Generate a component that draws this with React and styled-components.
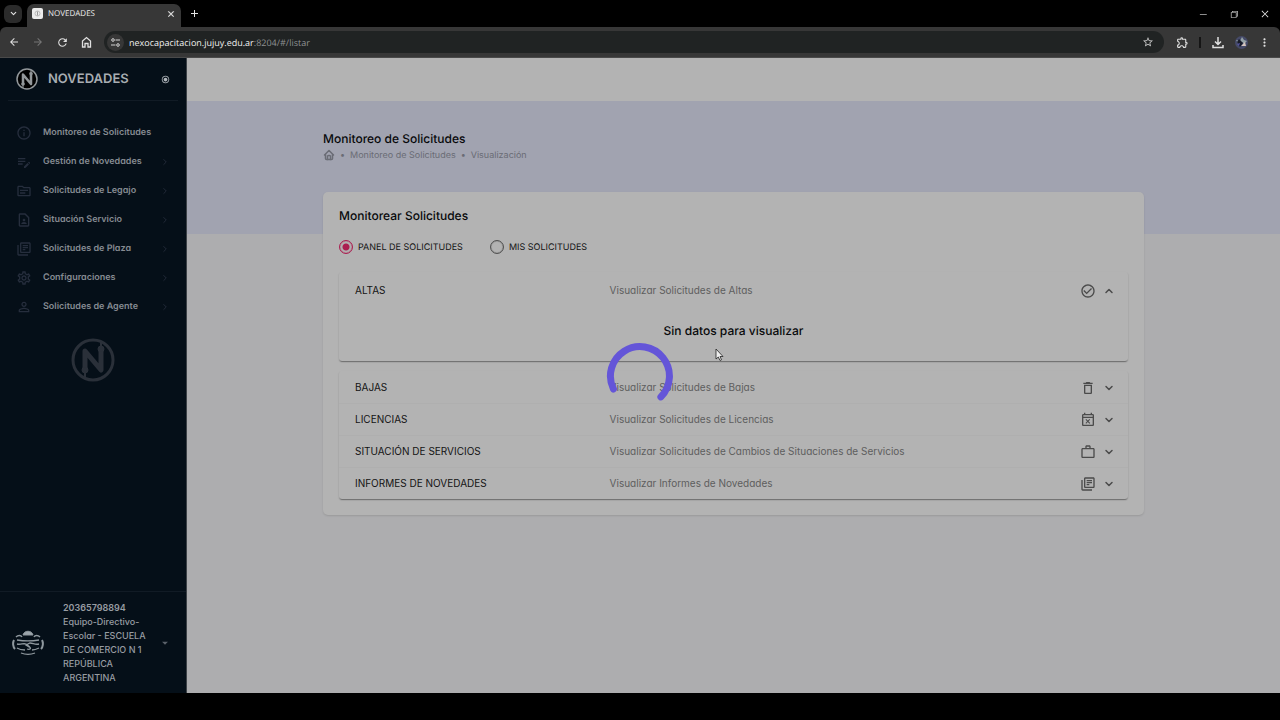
import React from 'react'
import styled, { createGlobalStyle } from 'styled-components'
import {
    MdOutlineInfo, MdOutlineEditNote, MdOutlineTopic, MdOutlineContactPage, MdOutlineLibraryBooks,
    MdOutlineSettings, MdPersonOutline, MdCheckCircleOutline, MdDeleteOutline, MdOutlineEventBusy,
    MdWorkOutline, MdArrowDropDown, MdRadioButtonChecked, MdStarBorder,
    MdOutlineExtension, MdMoreVert, MdArrowBack, MdArrowForward, MdRefresh
} from 'react-icons/md'
import { TbHome, TbChevronRight, TbChevronDown, TbChevronUp } from 'react-icons/tb'
import { VscChromeMinimize, VscChromeRestore, VscChromeClose } from 'react-icons/vsc'

const GlobalStyle = createGlobalStyle`
    * {
        box-sizing: border-box;
    }

    body {
        margin: 0;
        background: #000;
        font-family: Inter, "Liberation Sans", sans-serif;
        font-size: 10px;
        text-rendering: geometricPrecision;
    }

    button {
        display: flex;
        align-items: center;
        padding: 0;
        border: 0;
        background: none;
        color: inherit;
        font: inherit;
        text-align: left;
    }

    a {
        color: inherit;
        text-decoration: none;
    }

    h1, h2, p, ul, ol {
        margin: 0;
        padding: 0;
        list-style: none;
    }

    svg {
        display: block;
        flex: none;
    }
`;

const Window = styled.div`
    display: flex;
    flex-direction: column;
    height: 100vh;
    padding-bottom: 27px;
    background: #000;
`;

const TabStrip = styled.div`
    display: flex;
    align-items: center;
    height: 27px;
    padding: 0 8px 0 4px;
    color: #e4e4e4;
`;

const TabSearch = styled.button`
    justify-content: center;
    width: 18px;
    height: 18px;
    border-radius: 6px;
    background: #2b2b2b;
`;

const BrowserTab = styled.div`
    display: flex;
    align-items: center;
    gap: 5px;
    align-self: flex-end;
    width: 154px;
    height: 23px;
    margin: 0 9px 0 5px;
    padding: 0 6px 4px 5px;
    border-radius: 7px 7px 0 0;
    background: #373737;
    font-family: "Open Sans", sans-serif;
    font-size: 8px;
    color: #ececec;
`;

const TabTitle = styled.span`
    flex: 1;
`;

const WindowButtons = styled.div`
    display: flex;
    gap: 21px;
    margin-left: auto;
    padding-right: 2px;
`;

const Toolbar = styled.div`
    display: flex;
    align-items: center;
    gap: 12px;
    height: 31px;
    padding: 0 9px 0 8px;
    border-radius: 6px 6px 0 0;
    border-bottom: 1px solid #4a4a4a;
    background: #373737;
`;

const ToolActions = styled.div`
    display: flex;
    align-items: center;
    gap: 10px;
`;

const ToolButton = styled.button`
    color: ${({ $dim }) => ($dim ? '#757575' : '#e0e0e0')};
`;

const AddressBar = styled.div`
    display: flex;
    flex: 1;
    align-items: center;
    gap: 5px;
    height: 22px;
    padding: 0 10px 0 3px;
    border-radius: 11px;
    background: #202323;
    font-family: "Open Sans", sans-serif;
    font-size: 9px;
    color: #8d9090;
`;

const SiteInfo = styled.button`
    justify-content: center;
    width: 17px;
    height: 17px;
    border-radius: 50%;
    background: #373737;
    color: #d4d4d4;
`;

const Address = styled.span`
    flex: 1;

    b {
        font-weight: 500;
        color: #f0f0f0;
    }
`;

const ToolDivider = styled.span`
    width: 2px;
    height: 11px;
    background: #151515;
`;

const Page = styled.div`
    display: flex;
    flex: 1;
    min-height: 0;
`;

const Sidebar = styled.aside`
    display: flex;
    flex-direction: column;
    width: 187px;
    border-right: 1px solid #3d4247;
    background: #050f18;
    color: #868b92;
`;

const Brand = styled.div`
    display: flex;
    align-items: center;
    gap: 10px;
    height: 43px;
    margin: 0 8px;
    padding: 0 8px;
    border-bottom: 1px solid #111b25;
`;

const BrandName = styled.span`
    flex: 1;
    font-size: 13px;
    font-weight: 600;
    color: #a8adb2;
`;

const Menu = styled.ul`
    padding: 17px 16px 0;
`;

const MenuLink = styled.a`
    display: flex;
    align-items: center;
    gap: 11px;
    height: 29px;
    font-size: 9px;
    font-feature-settings: "cv11";
    font-weight: 600;

    svg {
        color: #262e3d;
    }
`;

const MenuLabel = styled.span`
    flex: 1;
    white-space: nowrap;
`;

const Watermark = styled.div`
    display: flex;
    justify-content: center;
    padding-top: 17px;
`;

const Account = styled.button`
    margin-top: auto;
    padding: 9px 14px 8px 12px;
    border-top: 1px solid #111b25;
    font-size: 9px;
    font-feature-settings: "cv11";
    font-weight: 500;
    line-height: 14px;
    color: #979ca2;
`;

const AccountText = styled.span`
    flex: 1;
    margin: 0 4px 0 19px;

    b {
        display: block;
        font-weight: 600;
    }
`;

const Main = styled.main`
    display: flex;
    flex: 1;
    flex-direction: column;
    min-width: 0;
    background: #adadaf;
`;

const TopBar = styled.header`
    height: 43px;
    background: #b3b3b3;
`;

const Content = styled.div`
    flex: 1;
    padding: 30px 136px 0;
    background: linear-gradient(#a1a3b0 133px, #adadaf 133px);
`;

const PageTitle = styled.h1`
    font-size: 12px;
    font-weight: 500;
    line-height: 15px;
    color: #08090b;
`;

const Breadcrumb = styled.ol`
    display: flex;
    align-items: center;
    gap: 5px;
    height: 18px;
    font-size: 9px;
    color: #6a6c75;
`;

const Card = styled.section`
    margin-top: 28px;
    padding: 16px;
    border-radius: 5px;
    background: #b3b3b3;
    box-shadow: 0 1px 2px rgba(0, 0, 0, 0.12);
`;

const CardTitle = styled.h2`
    font-size: 12px;
    font-weight: 500;
    line-height: 16px;
    color: #08090b;
`;

const RadioGroup = styled.div`
    display: flex;
    gap: 27px;
    margin-top: 15px;
`;

const RadioLabel = styled.label`
    display: flex;
    align-items: center;
    gap: 5px;
    height: 16px;
    font-size: 9px;
    color: #141414;
`;

const Radio = styled.input`
    appearance: none;
    width: 14px;
    height: 14px;
    margin: 0;
    border: 1px solid #515151;
    border-radius: 50%;
    box-shadow: inset 0 0 1px #515151;

    &:checked {
        border-color: #ab1e50;
        background: radial-gradient(#ab1e50 0 3px, transparent 4px);
        box-shadow: inset 0 0 1px #ab1e50;
    }
`;

const Accordion = styled.div`
    margin-top: ${({ $first }) => ($first ? '17px' : '10px')};
    border-radius: 3px;
    box-shadow: 0 2px 1px -1px rgba(0, 0, 0, 0.2), 0 1px 1px rgba(0, 0, 0, 0.14), 0 1px 2px rgba(0, 0, 0, 0.12);
`;

const Row = styled.button`
    width: 100%;
    height: ${({ $open }) => ($open ? '36px' : '32px')};
    padding: 0 13px 0 16px;
    color: #4b4b4b;

    & + & {
        box-shadow: inset 0 1px #afafaf;
    }
`;

const RowName = styled.span`
    flex: 0 0 33.5%;
    color: #141414;
`;

const RowHint = styled.span`
    flex: 1;
    font-feature-settings: "cv11";
    color: #5e5e5e;
`;

const RowIcons = styled.span`
    display: flex;
    align-items: center;
    gap: 7px;
    padding-top: 2px;
`;

const Empty = styled.p`
    padding: 15px 0 22px;
    font-size: 12px;
    font-weight: 500;
    line-height: 16px;
    text-align: center;
    color: #08090b;
`;

const Spinner = styled.svg`
    position: fixed;
    left: calc(50% - 34px);
    top: 342px;
`;

const Cursor = styled.svg`
    position: fixed;
    left: calc(50% + 75px);
    top: 348px;
`;

const Logo = ({ size, color, fill }) => (
    <svg width={size} height={size} viewBox="0 0 44 44" fill="none" stroke={color}>
        <circle cx="22" cy="22" r="20" strokeWidth="3" fill={fill} />
        <path d="M14 33V13L30 32V12" strokeWidth="5" strokeLinejoin="round" />
        <circle cx="14" cy="32" r="3" fill={color} />
        <circle cx="30" cy="11" r="3" fill={color} />
        <path d="M14 32v8M30 11V4" strokeWidth="2" />
    </svg>
)

const Crest = () => (
    <svg width="32" height="26" viewBox="0 0 32 26" fill="none" stroke="#8f989e">
        <path d="M11 5C12 0 20 0 21 5Z" fill="#9ba4aa" />
        <path d="M4 7C6 5 9 5 10 7M28 7C26 5 23 5 22 7" strokeWidth="1.5" />
        <path d="M2 10C0.5 13 1 17 3 19M30 10c1.5 3 1 7-1 9" strokeWidth="2" />
        <path d="M5 10C11 11 21 11 27 10M5 14C9 15 11 13 14 14L18 17M27 14C23 15 21 13 18 13L14 15L17 17C20 18 18 20 15 19" strokeWidth="1.3" />
        <path d="M5 18C8 20 11 20 13 20M20 20C23 20 25 19 27 18M9 23C14 25 18 25 23 23" strokeWidth="1.3" />
    </svg>
)

const menu = [
    { label: 'Monitoreo de Solicitudes', Icon: MdOutlineInfo, leaf: true },
    { label: 'Gestión de Novedades', Icon: MdOutlineEditNote },
    { label: 'Solicitudes de Legajo', Icon: MdOutlineTopic },
    { label: 'Situación Servicio', Icon: MdOutlineContactPage },
    { label: 'Solicitudes de Plaza', Icon: MdOutlineLibraryBooks },
    { label: 'Configuraciones', Icon: MdOutlineSettings },
    { label: 'Solicitudes de Agente', Icon: MdPersonOutline },
]

const rows = [
    { name: 'BAJAS', hint: 'Visualizar Solicitudes de Bajas', Icon: MdDeleteOutline },
    { name: 'LICENCIAS', hint: 'Visualizar Solicitudes de Licencias', Icon: MdOutlineEventBusy },
    { name: 'SITUACIÓN DE SERVICIOS', hint: 'Visualizar Solicitudes de Cambios de Situaciones de Servicios', Icon: MdWorkOutline },
    { name: 'INFORMES DE NOVEDADES', hint: 'Visualizar Informes de Novedades', Icon: MdOutlineLibraryBooks },
]

const AccordionRow = ({ name, hint, Icon, open }) => (
    <Row aria-expanded={!!open} $open={open}>
        <RowName>{name}</RowName>
        <RowHint>{hint}</RowHint>
        <RowIcons>
            <Icon size={16} />
            {open ? <TbChevronUp size={12} strokeWidth={3} /> : <TbChevronDown size={12} strokeWidth={3} />}
        </RowIcons>
    </Row>
)

const Browser = () => (
    <>
        <TabStrip>
            <TabSearch aria-label="Buscar pestañas"><TbChevronDown size={9} strokeWidth={3} /></TabSearch>
            <BrowserTab>
                <svg width="11" height="11" viewBox="0 0 11 11">
                    <rect width="11" height="11" rx="2" fill="#ececec" />
                    <circle cx="5.5" cy="5.5" r="2.5" fill="none" stroke="#bbb" />
                    <path d="M5.5 3.5v4" stroke="#999" />
                </svg>
                <TabTitle>NOVEDADES</TabTitle>
                <button aria-label="Cerrar pestaña"><VscChromeClose size={8} strokeWidth={1} /></button>
            </BrowserTab>
            <button aria-label="Nueva pestaña">
                <svg width="9" height="9" viewBox="0 0 9 9" stroke="currentColor"><path d="M4.5 1v7M1 4.5h7" /></svg>
            </button>
            <WindowButtons>
                <button aria-label="Minimizar"><VscChromeMinimize size={10} /></button>
                <button aria-label="Restaurar"><VscChromeRestore size={10} /></button>
                <button aria-label="Cerrar"><VscChromeClose size={10} /></button>
            </WindowButtons>
        </TabStrip>
        <Toolbar>
            <ToolButton aria-label="Atrás"><MdArrowBack size={12} /></ToolButton>
            <ToolButton aria-label="Adelante" $dim><MdArrowForward size={12} /></ToolButton>
            <ToolButton aria-label="Recargar"><MdRefresh size={13} /></ToolButton>
            <ToolButton aria-label="Inicio">
                <svg width="11" height="12" viewBox="0 0 11 12" fill="none" stroke="currentColor" strokeWidth="1.3">
                    <path d="M1.5 11V5L5.5 1.5L9.5 5V11H7V7.5H4V11Z" />
                </svg>
            </ToolButton>
            <AddressBar>
                <SiteInfo aria-label="Información del sitio">
                    <svg width="9" height="9" viewBox="0 0 9 9" fill="none" stroke="currentColor">
                        <circle cx="2" cy="2" r="1.3" /><path d="M4.5 2H9M0 7h4.5" /><circle cx="7" cy="7" r="1.3" />
                    </svg>
                </SiteInfo>
                <Address><b>nexocapacitacion.jujuy.edu.ar</b>:8204/#/listar</Address>
                <MdStarBorder size={12} color="#c8c8c8" />
            </AddressBar>
            <ToolActions>
                <ToolButton aria-label="Extensiones"><MdOutlineExtension size={13} /></ToolButton>
                <ToolDivider />
                <ToolButton aria-label="Descargas">
                    <svg width="14" height="13" viewBox="0 0 14 13" fill="none" stroke="currentColor" strokeWidth="1.5">
                        <path d="M7 1V8M4 5.5L7 8.5L10 5.5M2 9V11.5H12V9" />
                    </svg>
                </ToolButton>
                <ToolButton aria-label="Perfil">
                    <svg width="13" height="13" viewBox="0 0 13 13">
                        <circle cx="6.5" cy="6.5" r="6.5" fill="#454a68" />
                        <path d="M1 4L5 5L7 1L9 4L12 5L9 8L7 6L4 9Z" fill="#94a2a6" />
                        <path d="M6 10L10 6L11 10Z" fill="#d4c4bc" />
                        <path d="M4 3L8 7L5 11L2 6Z" fill="#171b29" />
                        <path d="M2 8L5 7L4 10Z" fill="#5554a0" />
                    </svg>
                </ToolButton>
                <ToolButton aria-label="Menú"><MdMoreVert size={13} /></ToolButton>
            </ToolActions>
        </Toolbar>
    </>
)

const SideNav = () => (
    <Sidebar>
        <Brand>
            <Logo size={22} color="#92979a" fill="#000" />
            <BrandName>NOVEDADES</BrandName>
            <button aria-label="Fijar menú"><MdRadioButtonChecked size={9} color="#b4b9be" /></button>
        </Brand>
        <nav>
            <Menu>
                {menu.map(({ label, Icon, leaf }) => (
                    <li key={label}>
                        <MenuLink href="#/listar">
                            <Icon size={16} />
                            <MenuLabel>{label}</MenuLabel>
                            {!leaf && <TbChevronRight size={10} />}
                        </MenuLink>
                    </li>
                ))}
            </Menu>
        </nav>
        <Watermark><Logo size={44} color="#2a3039" fill="none" /></Watermark>
        <Account>
            <Crest />
            <AccountText>
                <b>20365798894</b>
                Equipo-Directivo-Escolar - ESCUELA DE COMERCIO N 1 REPÚBLICA ARGENTINA
            </AccountText>
            <MdArrowDropDown size={14} color="#5b626a" />
        </Account>
    </Sidebar>
)

const App = () => {
    return (
        <Window>
            <GlobalStyle />
            <Browser />
            <Page>
                <SideNav />
                <Main>
                    <TopBar />
                    <Content>
                        <PageTitle>Monitoreo de Solicitudes</PageTitle>
                        <Breadcrumb>
                            <li><a href="#/" aria-label="Inicio"><TbHome size={12} strokeWidth={3} /></a></li>
                            <li>•</li>
                            <li>Monitoreo de Solicitudes</li>
                            <li>•</li>
                            <li>Visualización</li>
                        </Breadcrumb>
                        <Card>
                            <CardTitle>Monitorear Solicitudes</CardTitle>
                            <RadioGroup>
                                <RadioLabel><Radio type="radio" name="vista" defaultChecked />PANEL DE SOLICITUDES</RadioLabel>
                                <RadioLabel><Radio type="radio" name="vista" />MIS SOLICITUDES</RadioLabel>
                            </RadioGroup>
                            <Accordion $first>
                                <AccordionRow name="ALTAS" hint="Visualizar Solicitudes de Altas" Icon={MdCheckCircleOutline} open />
                                <Empty>Sin datos para visualizar</Empty>
                            </Accordion>
                            <Accordion>
                                {rows.map((row) => <AccordionRow key={row.name} {...row} />)}
                            </Accordion>
                        </Card>
                    </Content>
                </Main>
            </Page>
            <Spinner width="68" height="68" viewBox="0 0 68 68" fill="none" aria-label="Cargando">
                <path d="M7.4 47A29.5 29.5 0 1 1 54.9 54.9" stroke="#6455d8" strokeWidth="7" strokeLinecap="round" />
            </Spinner>
            <Cursor width="9" height="14" viewBox="0 0 9 14">
                <path d="M1 1V11L3.3 9L5 12.5L6.5 11.8L5 8.5H8Z" fill="#eee" stroke="#222" strokeWidth="0.8" />
            </Cursor>
        </Window>
    )
}

export default App
